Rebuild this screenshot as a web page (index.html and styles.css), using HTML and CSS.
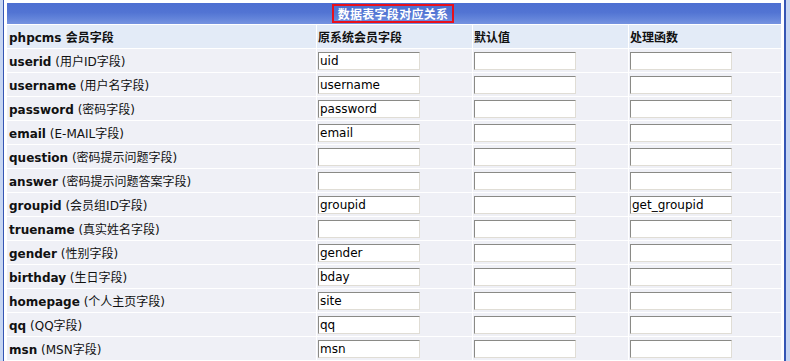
FILE: index.html
```html
<!DOCTYPE html>
<html lang="zh-CN">
<head>
<meta charset="utf-8">
<title>数据表字段对应关系</title>
<link rel="stylesheet" href="styles.css">
</head>
<body>
<div class="frame">
<table class="map">
<colgroup><col class="c1"><col class="c2"><col class="c3"><col class="c4"></colgroup>
<tr><th class="bar" colspan="4"><span class="title">数据表字段对应关系</span></th></tr>
<tr class="head"><td>phpcms 会员字段</td><td>原系统会员字段</td><td>默认值</td><td>处理函数</td></tr>
<tr><td><b>userid</b> (用户ID字段)</td><td><input class="f" value="uid"></td><td><input class="f" value=""></td><td><input class="f" value=""></td></tr>
<tr><td><b>username</b> (用户名字段)</td><td><input class="f" value="username"></td><td><input class="f" value=""></td><td><input class="f" value=""></td></tr>
<tr><td><b>password</b> (密码字段)</td><td><input class="f" value="password"></td><td><input class="f" value=""></td><td><input class="f" value=""></td></tr>
<tr><td><b>email</b> (E-MAIL字段)</td><td><input class="f" value="email"></td><td><input class="f" value=""></td><td><input class="f" value=""></td></tr>
<tr><td><b>question</b> (密码提示问题字段)</td><td><input class="f" value=""></td><td><input class="f" value=""></td><td><input class="f" value=""></td></tr>
<tr><td><b>answer</b> (密码提示问题答案字段)</td><td><input class="f" value=""></td><td><input class="f" value=""></td><td><input class="f" value=""></td></tr>
<tr><td><b>groupid</b> (会员组ID字段)</td><td><input class="f" value="groupid"></td><td><input class="f" value=""></td><td><input class="f" value="get_groupid"></td></tr>
<tr><td><b>truename</b> (真实姓名字段)</td><td><input class="f" value=""></td><td><input class="f" value=""></td><td><input class="f" value=""></td></tr>
<tr><td><b>gender</b> (性别字段)</td><td><input class="f" value="gender"></td><td><input class="f" value=""></td><td><input class="f" value=""></td></tr>
<tr><td><b>birthday</b> (生日字段)</td><td><input class="f" value="bday"></td><td><input class="f" value=""></td><td><input class="f" value=""></td></tr>
<tr><td><b>homepage</b> (个人主页字段)</td><td><input class="f" value="site"></td><td><input class="f" value=""></td><td><input class="f" value=""></td></tr>
<tr><td><b>qq</b> (QQ字段)</td><td><input class="f" value="qq"></td><td><input class="f" value=""></td><td><input class="f" value=""></td></tr>
<tr><td><b>msn</b> (MSN字段)</td><td><input class="f" value="msn"></td><td><input class="f" value=""></td><td><input class="f" value=""></td></tr>
</table>
</div>
</body>
</html>
```
FILE: styles.css
```css
html, body {
  margin: 0;
  padding: 0;
  background: #c7d6f2;
  height: 361px;
  overflow: hidden;
}
body {
  font-family: "DejaVu Sans", "Noto Sans CJK SC", sans-serif;
  font-size: 12px;
  color: #111;
}
.frame {
  margin-left: 3px;
  box-sizing: border-box;
  width: 783px;
  border-left: 1px solid #3556b4;
  border-right: 2px solid #3556b4;
  background: #fff;
  padding: 2px 2px 0 2px;
  height: 361px;
}
.map {
  width: 776px;
  table-layout: fixed;
  border-collapse: separate;
  border-spacing: 1px;
  background: #fff;
}
.c1 { width: 309px; }
.c2 { width: 155px; }
.c3 { width: 155px; }
.c4 { width: 152px; }
.map td, .map th {
  padding: 0 1px;
  height: 23px;
  background: #eff0f6;
  text-align: left;
  white-space: nowrap;
  overflow: hidden;
}
.map td:first-child { padding-left: 2px; }
.map th.bar {
  height: 21px;
  padding: 0;
  text-align: center;
  background: linear-gradient(#4d6fd1 0%, #5274d3 45%, #6384da 75%, #7693e0 100%);
  vertical-align: middle;
}
.title {
  display: inline-block;
  border: 2px solid #e8101c;
  color: #fff;
  font-weight: bold;
  font-size: 12px;
  line-height: 15px;
  padding: 0 4px;
  margin-left: -2px;
  font-family: "Noto Sans CJK SC", sans-serif;
  letter-spacing: 0.3px;
}
.head td {
  background: #e3ebf7;
  font-weight: bold;
}
.map b { font-weight: bold; }
.f {
  display: block;
  box-sizing: border-box;
  width: 102px;
  height: 18px;
  margin: 0;
  padding: 0 1px;
  border: 1px solid;
  border-color: #8a8a86 #e0ddd5 #e0ddd5 #8a8a86;
  background: #fff;
  font-family: "DejaVu Sans", sans-serif;
  font-size: 12px;
  color: #000;
}
```
